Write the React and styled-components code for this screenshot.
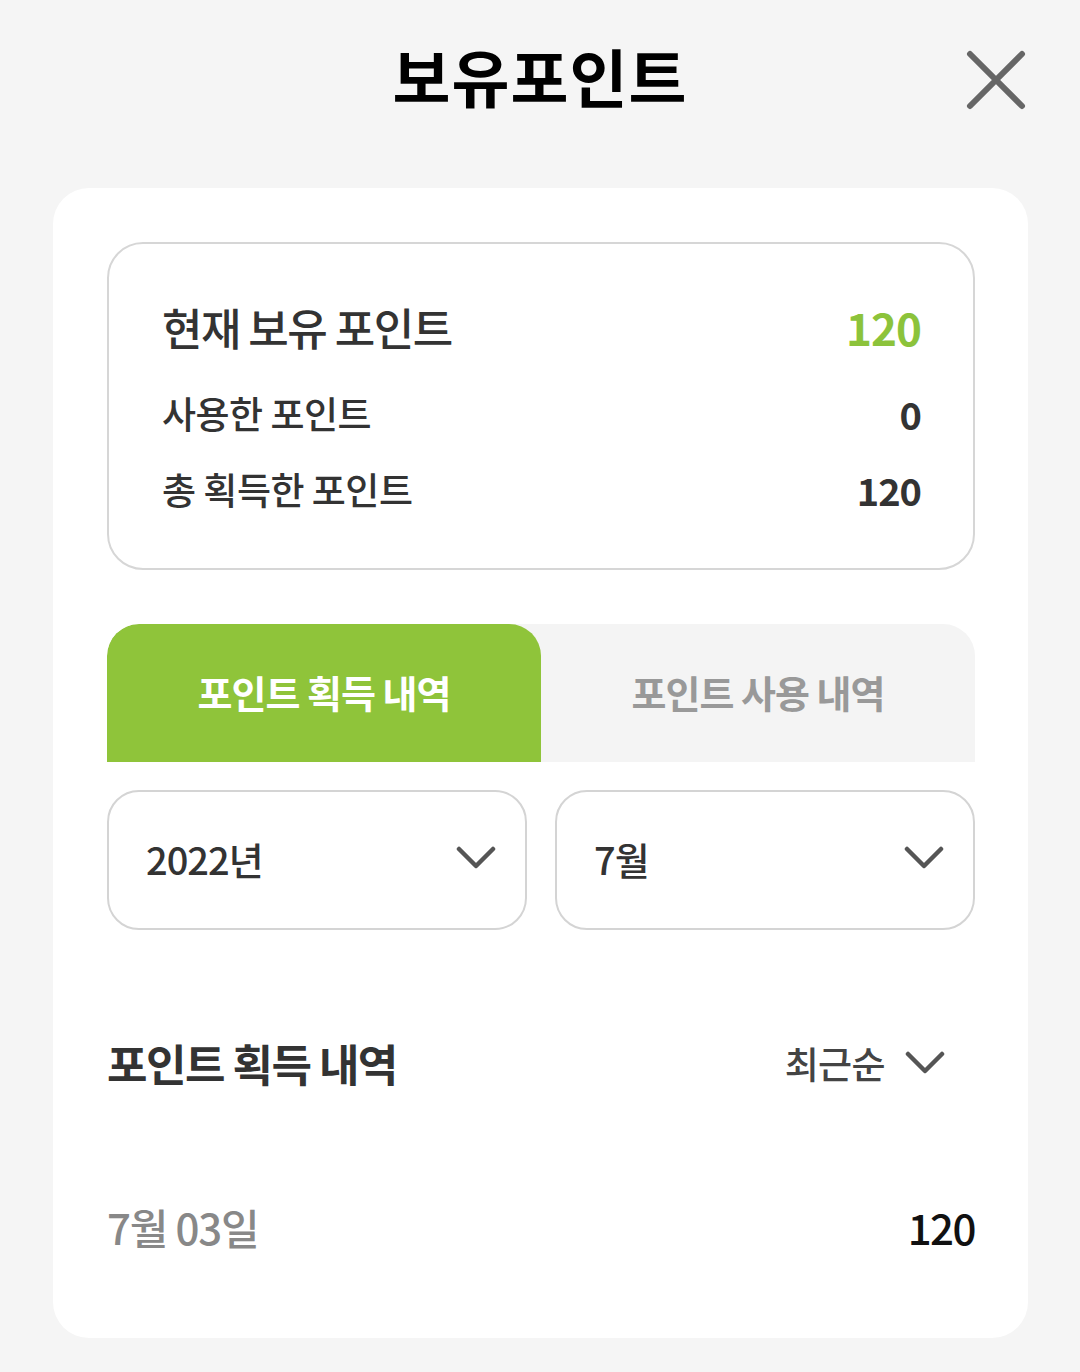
import React, { useState } from 'react';
import styled, { createGlobalStyle } from 'styled-components';

const GlobalStyle = createGlobalStyle`
  body {
    margin: 0;
    background: #f5f5f5;
    font-family: "Noto Sans CJK KR", "Noto Sans", sans-serif;
  }
`;

const Page = styled.div`
  width: 1080px;
  min-height: 1372px;
  background: #f5f5f5;
  padding-top: 34px;
  box-sizing: border-box;
`;

const Header = styled.header`
  position: relative;
  height: 86px;
  display: flex;
  align-items: center;
  justify-content: center;
`;

const Title = styled.h1`
  margin: 0;
  font-size: 63px;
  font-weight: 700;
  letter-spacing: 1px;
  color: #000;
  line-height: 1;
  transform: translateY(-3px);
`;

const CloseButton = styled.button`
  position: absolute;
  right: 54px;
  top: 16px;
  width: 60px;
  height: 60px;
  padding: 0;
  border: none;
  background: none;
  cursor: pointer;
`;

const Card = styled.main`
  margin: 68px 52px 0 53px;
  background: #fff;
  border-radius: 36px;
  padding: 54px 53px 40px 54px;
  height: 1150px;
  box-sizing: border-box;
`;

const Summary = styled.section`
  border: 2px solid #d6d6d6;
  border-radius: 36px;
  height: 328px;
  box-sizing: border-box;
  padding: 52px 52px 0 53px;
  display: flex;
  flex-direction: column;
`;

const SummaryRow = styled.div`
  display: flex;
  justify-content: space-between;
  align-items: center;
  height: ${({ $main }) => ($main ? '62px' : '76px')};
  margin-bottom: ${({ $main }) => ($main ? '17px' : '0')};
`;

const SummaryLabel = styled.span`
  font-size: ${({ $main }) => ($main ? '44px' : '37px')};
  font-weight: 500;
  color: #333;
  letter-spacing: ${({ $main }) => ($main ? '-1.5px' : '-0.5px')};
`;

const SummaryValue = styled.span`
  font-size: ${({ $main }) => ($main ? '44px' : '38px')};
  font-weight: 700;
  letter-spacing: -1px;
  color: ${({ $accent }) => ($accent ? '#8cc33b' : '#333')};
`;

const Tabs = styled.div`
  margin-top: 54px;
  display: flex;
  height: 138px;
  background: #f4f4f4;
  border-radius: 32px 32px 0 0;
  overflow: hidden;
`;

const Tab = styled.button`
  flex: 1;
  border: none;
  font-family: inherit;
  font-size: 38px;
  font-weight: 700;
  letter-spacing: -1px;
  padding: 0 0 4px;
  cursor: pointer;
  border-radius: 32px 32px 0 0;
  background: ${({ $active }) => ($active ? '#8fc43a' : 'transparent')};
  color: ${({ $active }) => ($active ? '#fff' : '#999')};
`;

const Filters = styled.div`
  margin-top: 28px;
  display: grid;
  grid-template-columns: 1fr 1fr;
  gap: 28px;
`;

const Select = styled.div`
  height: 140px;
  border: 2px solid #d4d4d4;
  border-radius: 32px;
  box-sizing: border-box;
  display: flex;
  align-items: center;
  justify-content: space-between;
  padding: 0 29px 4px 37px;
  font-size: 38px;
  font-weight: 500;
  letter-spacing: -1px;
  color: #333;
`;

const SectionHeader = styled.div`
  margin-top: 102px;
  display: flex;
  justify-content: space-between;
  align-items: center;
  height: 62px;
`;

const SectionTitle = styled.h2`
  margin: 0;
  font-size: 44px;
  font-weight: 700;
  letter-spacing: -1.5px;
  color: #333;
`;

const SortButton = styled.button`
  display: flex;
  align-items: center;
  gap: 20px;
  border: none;
  background: none;
  padding: 0 30px 0 0;
  font-family: inherit;
  font-size: 37px;
  font-weight: 500;
  letter-spacing: -0.6px;
  color: #444;
  cursor: pointer;
`;

const HistoryRow = styled.div`
  margin-top: 102px;
  display: flex;
  justify-content: space-between;
  align-items: center;
  height: 60px;
`;

const HistoryDate = styled.span`
  font-size: 42px;
  font-weight: 500;
  letter-spacing: -1.2px;
  color: #888;
`;

const HistoryAmount = styled.span`
  font-size: 42px;
  font-weight: 500;
  letter-spacing: -1.5px;
  color: #111;
`;

const Chevron = () => (
  <svg width="40" height="26" viewBox="0 0 40 26" fill="none">
    <path d="M3 4 L20 21 L37 4" stroke="#555" strokeWidth="4.5" strokeLinecap="round" strokeLinejoin="round" />
  </svg>
);

const summary = [
  { label: '사용한 포인트', value: 0 },
  { label: '총 획득한 포인트', value: 120 },
];

export default function App() {
  const [tab, setTab] = useState('earn');

  return (
    <Page>
      <GlobalStyle />
      <Header>
        <Title>보유포인트</Title>
        <CloseButton aria-label="닫기">
          <svg width="60" height="60" viewBox="0 0 60 60">
            <path d="M4 4 L56 56 M56 4 L4 56" stroke="#666" strokeWidth="6" strokeLinecap="round" />
          </svg>
        </CloseButton>
      </Header>
      <Card>
        <Summary>
          <SummaryRow $main>
            <SummaryLabel $main>현재 보유 포인트</SummaryLabel>
            <SummaryValue $main $accent>120</SummaryValue>
          </SummaryRow>
          {summary.map(item => (
            <SummaryRow key={item.label}>
              <SummaryLabel>{item.label}</SummaryLabel>
              <SummaryValue>{item.value}</SummaryValue>
            </SummaryRow>
          ))}
        </Summary>

        <Tabs>
          <Tab $active={tab === 'earn'} onClick={() => setTab('earn')}>포인트 획득 내역</Tab>
          <Tab $active={tab === 'use'} onClick={() => setTab('use')}>포인트 사용 내역</Tab>
        </Tabs>

        <Filters>
          <Select>
            <span>2022년</span>
            <Chevron />
          </Select>
          <Select>
            <span>7월</span>
            <Chevron />
          </Select>
        </Filters>

        <SectionHeader>
          <SectionTitle>포인트 획득 내역</SectionTitle>
          <SortButton>
            최근순
            <Chevron />
          </SortButton>
        </SectionHeader>

        <HistoryRow>
          <HistoryDate>7월 03일</HistoryDate>
          <HistoryAmount>120</HistoryAmount>
        </HistoryRow>
      </Card>
    </Page>
  );
}
